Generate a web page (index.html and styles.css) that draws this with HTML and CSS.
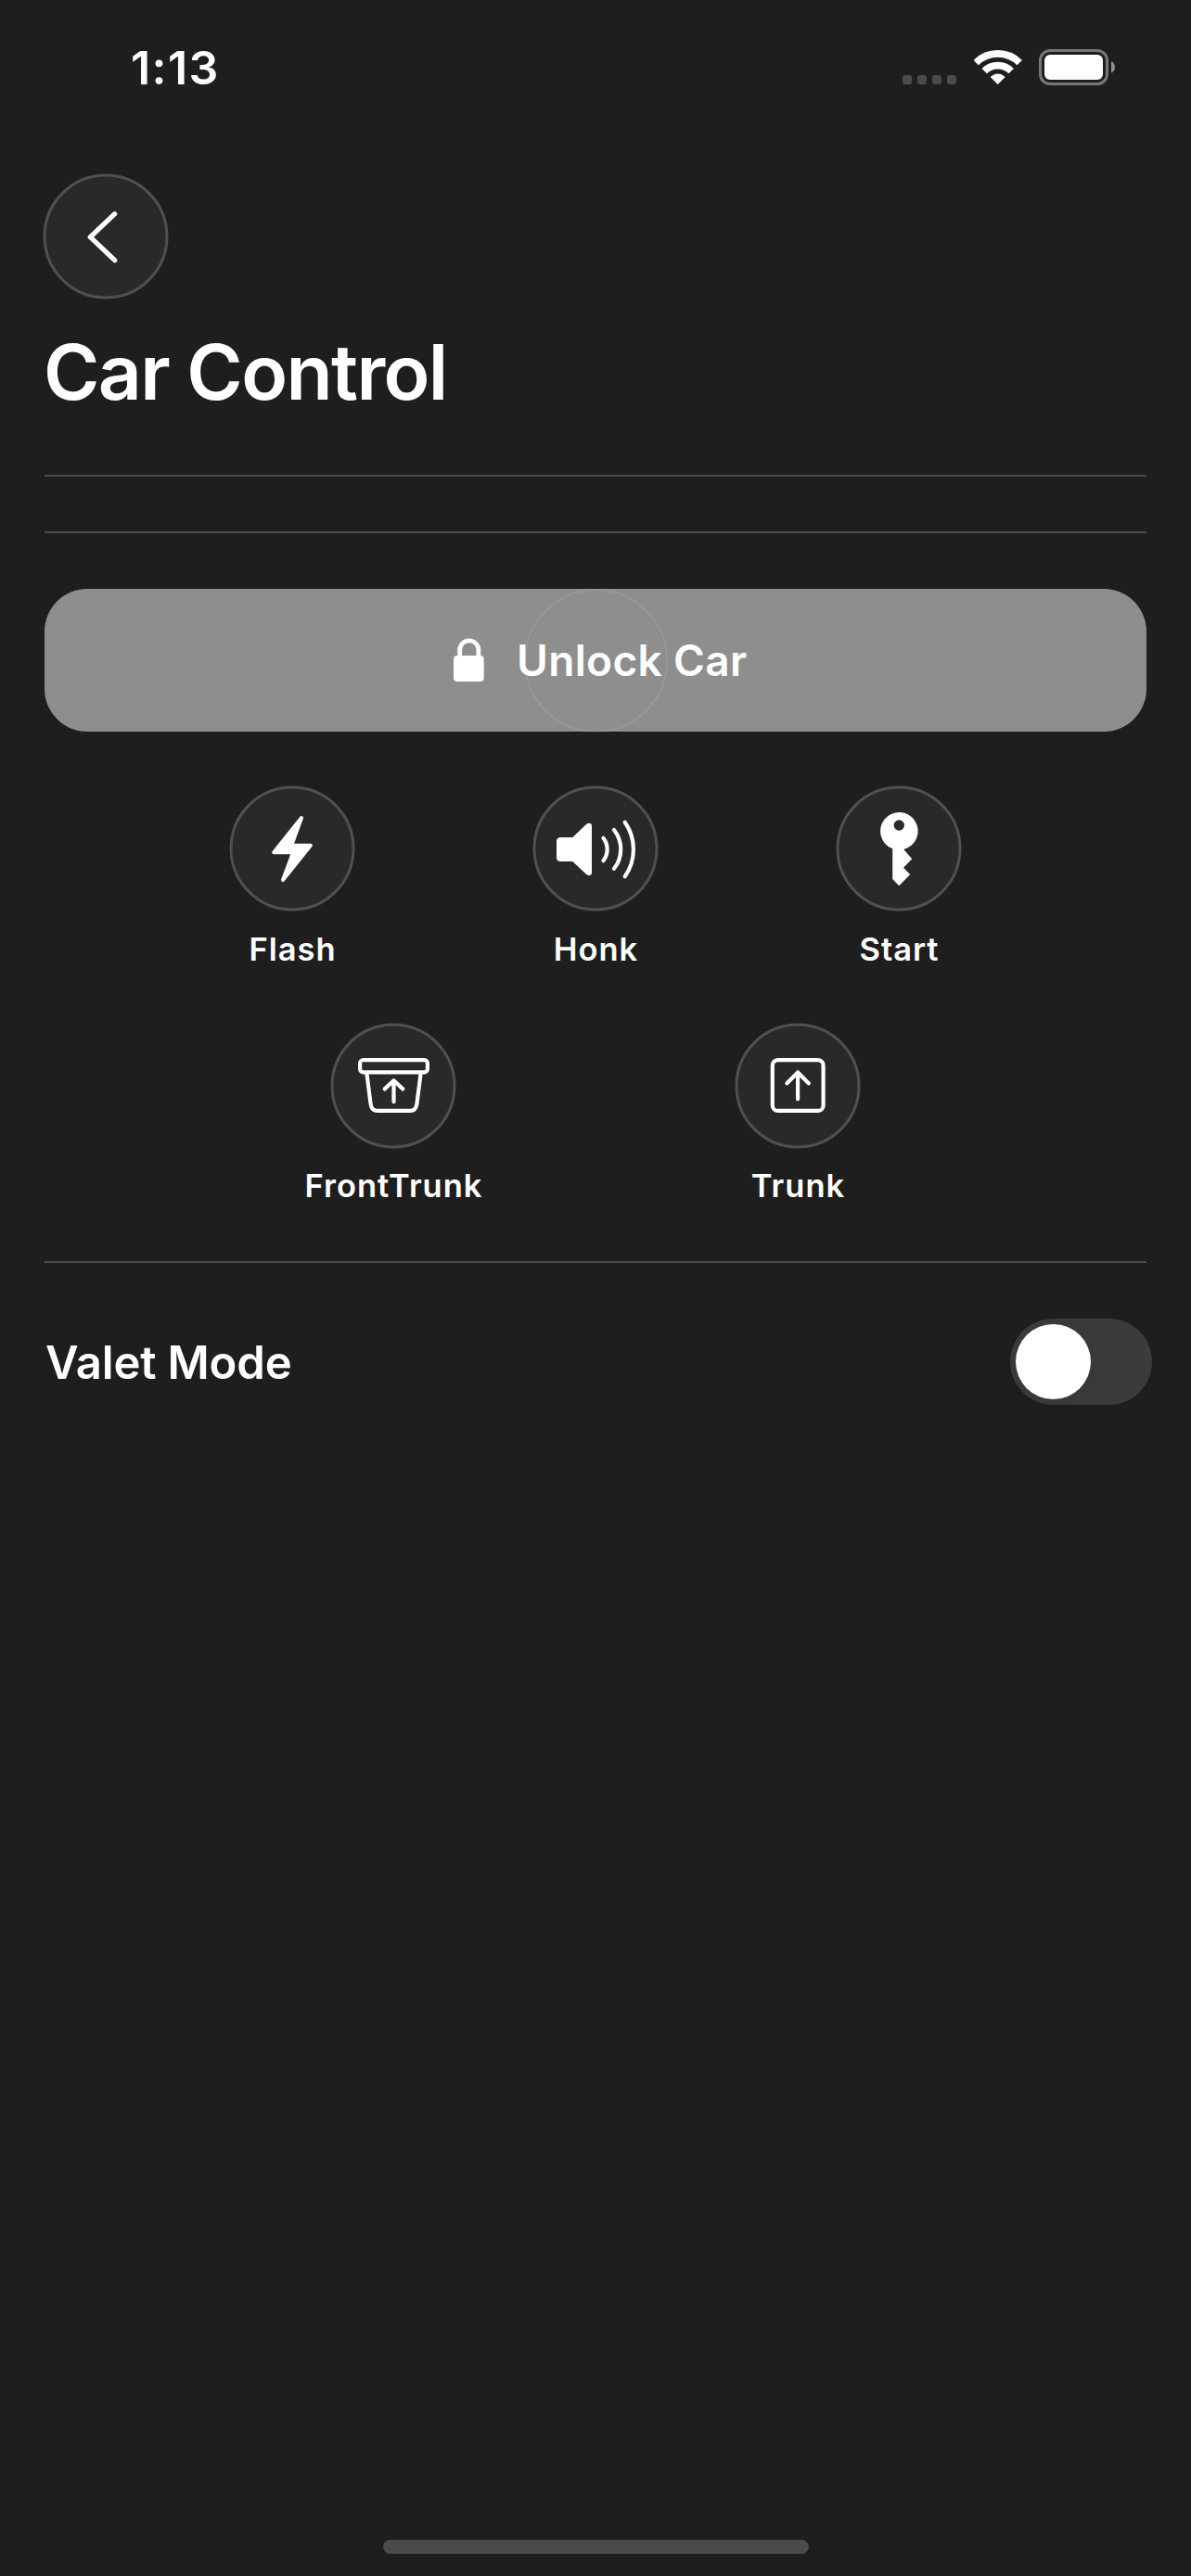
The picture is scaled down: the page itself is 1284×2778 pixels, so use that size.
FILE: index.html
```html
<!DOCTYPE html>
<html lang="en">
<head>
<meta charset="utf-8">
<title>Car Control</title>
<link rel="stylesheet" href="styles.css">
</head>
<body>
<div class="screen">
  <header class="status-bar">
    <span class="time">1:13</span>
    <div class="status-icons">
      <div class="cell-dots"><i></i><i></i><i></i><i></i></div>
      <svg class="wifi" viewBox="0 0 52 38" fill="none" stroke="#fff" stroke-width="7.6">
        <path d="M2.2 13.6A33.2 33.2 0 0 1 49.2 13.6"/>
        <path d="M11.2 22.6A20.5 20.5 0 0 1 40.2 22.6"/>
        <path d="M25.7 37L17.9 29.2Q18.2 28.4 19 27.9A11.7 11.7 0 0 1 32.4 27.9Q33.2 28.4 33.5 29.2Z" fill="#fff" stroke="none"/>
      </svg>
      <svg class="battery" viewBox="0 0 82 39">
        <rect x="1.5" y="1.5" width="72" height="36" rx="10.5" fill="none" stroke="#777" stroke-width="3"/>
        <rect x="6" y="6" width="63" height="27" rx="6" fill="#fff"/>
        <path d="M78 13.3Q82 15.2 82 19.5T78 25.7Z" fill="#8e8e8e"/>
      </svg>
    </div>
  </header>

  <main class="content">
    <button class="round back" aria-label="Back">
      <svg viewBox="0 0 136 136"><circle class="ring" cx="68" cy="68" r="66"/><path class="line" stroke-width="5.2" d="M77.7 43.7L51.3 68.7L77.7 93.7"/></svg>
    </button>
    <h1 class="title">Car Control</h1>
    <div class="divider"></div>
    <div class="divider second"></div>

    <button class="unlock">
      <svg class="lock" viewBox="0 0 33 48">
        <path d="M6.7 22V13a10.1 10.1 0 0 1 20.2 0V22" fill="none" stroke="#fff" stroke-width="4.8"/>
        <rect x="0" y="19" width="32.7" height="28" rx="4" fill="#fff"/>
      </svg>
      <span class="unlock-text">Unlock Car</span>
      <span class="ripple"></span>
    </button>

    <div class="actions first">
      <div class="action">
        <button class="round"><svg viewBox="0 0 136 136"><circle class="ring" cx="68" cy="68" r="66"/><path class="solid" stroke-width="4" d="M78 35L67.2 64.7H87.8L58 102L69.1 72.3H48.2Z"/></svg></button>
        <span class="label">Flash</span>
      </div>
      <div class="action">
        <button class="round"><svg viewBox="0 0 136 136">
          <circle class="ring" cx="68" cy="68" r="66"/>
          <path fill="#fff" d="M30.5 56H43.3L58 42Q59.5 40.7 61 40.7Q64 40.7 64 44V94Q64 97 61 97Q59.5 97 58 95.8L43.3 82H30.5Q26 82 26 77.5V60.5Q26 56 30.5 56Z"/>
          <path class="line" stroke-width="4.2" d="M76.4 56.8A19.5 19.5 0 0 1 76.4 81.1M88 48A33.8 33.8 0 0 1 88 89.8M99.7 39.8A50.8 50.8 0 0 1 99.7 98.2"/>
        </svg></button>
        <span class="label">Honk</span>
      </div>
      <div class="action">
        <button class="round"><svg viewBox="0 0 136 136"><circle class="ring" cx="68" cy="68" r="66"/><path fill="#fff" fill-rule="evenodd" d="M61.2 68.3A20.3 20.3 0 1 1 73.3 69L82.2 79.3L73 88.7L80.2 96L68.3 108.2L61.2 101ZM68.3 37.3a5.7 5.7 0 1 0 0 11.4a5.7 5.7 0 1 0 0-11.4Z"/></svg></button>
        <span class="label">Start</span>
      </div>
    </div>

    <div class="actions lower">
      <div class="action">
        <button class="round"><svg viewBox="0 0 136 136">
          <circle class="ring" cx="68" cy="68" r="66"/>
          <rect class="line" stroke-width="4.2" x="32.1" y="40.1" width="72.8" height="13.2" rx="3.5"/>
          <path class="line" stroke-width="4.2" d="M39.4 54.5L43.6 87.5Q44.6 94.9 51 94.9H86Q92.4 94.9 93.4 87.5L97.6 54.5M68.5 85.2V62.5M58.7 71.4L68.5 62.3L78.3 71.4"/>
        </svg></button>
        <span class="label">FrontTrunk</span>
      </div>
      <div class="action">
        <button class="round"><svg viewBox="0 0 136 136">
          <circle class="ring" cx="68" cy="68" r="66"/>
          <rect class="line" stroke-width="4.2" x="40.8" y="40.1" width="54.8" height="54.8" rx="6"/>
          <path class="line" stroke-width="4.2" d="M68.1 82.3V53.3M56.4 65.3L68.1 53.5L79.8 65.3"/>
        </svg></button>
        <span class="label">Trunk</span>
      </div>
    </div>

    <div class="divider third"></div>
    <div class="valet">
      <span class="valet-text">Valet Mode</span>
      <div class="toggle"><div class="knob"></div></div>
    </div>
  </main>
  <footer class="home"><div class="home-bar"></div></footer>
</div>
</body>
</html>
```
FILE: styles.css
```css
* { box-sizing: border-box; }
body {
  margin: 0;
  background: #1e1e1e;
  color: #fff;
  font-family: Inter, "Liberation Sans", sans-serif;
}
button {
  margin: 0;
  padding: 0;
  border: 0;
  background: none;
  color: inherit;
  font: inherit;
}
svg { display: block; }
.screen {
  display: flex;
  flex-direction: column;
  width: 1284px;
  height: 2778px;
  overflow: hidden;
}
.status-bar {
  display: flex;
  justify-content: space-between;
  height: 187px;
  padding: 43px 82px 0 141px;
}
.time {
  font-size: 50px;
  font-weight: 600;
  line-height: 60px;
  letter-spacing: 1.4px;
}
.status-icons {
  display: flex;
  align-items: flex-start;
  padding-top: 10px;
}
.cell-dots {
  display: flex;
  gap: 6px;
  margin: 28px 19px 0 0;
}
.cell-dots i {
  width: 10px;
  height: 10px;
  border-radius: 3px;
  background: #4b4b4b;
}
.wifi { width: 52px; height: 38px; margin: 1px 18px 0 0; }
.battery { width: 82px; height: 39px; }

.content { flex: 1; padding: 0 48px; }
.round {
  display: block;
  width: 136px;
  height: 136px;
  border-radius: 50%;
}
.round svg { width: 136px; height: 136px; }
.ring {
  fill: #292929;
  stroke: #505050;
  stroke-width: 3;
}
.back { margin-left: -2px; }
.line {
  fill: none;
  stroke: #fff;
  stroke-linecap: round;
  stroke-linejoin: round;
}
.solid {
  fill: #fff;
  stroke: #fff;
  stroke-linejoin: round;
}
.title {
  margin: 29px 0 60px -1px;
  font-size: 82px;
  font-weight: 600;
  line-height: 100px;
  letter-spacing: -1.6px;
  white-space: nowrap;
}
.divider { height: 2px; background: #4b4b4b; }
.second { margin-top: 59px; }

.unlock {
  position: relative;
  display: flex;
  align-items: center;
  width: 1188px;
  height: 154px;
  margin-top: 60px;
  padding-left: 441px;
  border-radius: 46px;
  background: #8e8e8e;
}
.lock { width: 33px; height: 48px; }
.unlock-text {
  margin-left: 35px;
  font-size: 46px;
  font-weight: 600;
  line-height: 60px;
  letter-spacing: 0.35px;
  white-space: nowrap;
}
.ripple {
  position: absolute;
  top: 0;
  left: 517px;
  width: 155px;
  height: 155px;
  border: 2px solid rgba(255, 255, 255, 0.09);
  border-radius: 50%;
}

.actions { display: flex; justify-content: center; }
.first { margin-top: 58px; gap: 191px; }
.lower { margin-top: 57px; gap: 300px; }
.action {
  display: flex;
  flex-direction: column;
  align-items: center;
  width: 136px;
}
.label {
  margin-top: 19px;
  padding-left: 1px;
  font-size: 34.5px;
  font-weight: 600;
  line-height: 44px;
  letter-spacing: 1px;
  white-space: nowrap;
}
.lower .label { margin-top: 18px; }
.third { margin-top: 59px; }
.valet {
  display: flex;
  align-items: center;
  justify-content: space-between;
  margin: 60px -6px 0 0;
}
.valet-text {
  padding: 2px 0 0 1px;
  font-size: 49px;
  font-weight: 600;
  line-height: 60px;
  letter-spacing: -0.15px;
  white-space: nowrap;
}
.toggle {
  width: 153px;
  height: 93px;
  padding: 6px;
  border-radius: 47px;
  background: #3b3b3d;
}
.knob {
  width: 81px;
  height: 81px;
  border-radius: 50%;
  background: #fff;
  box-shadow: 3px 6px 16px rgba(0, 0, 0, 0.08);
}
.home {
  display: flex;
  justify-content: center;
  height: 39px;
}
.home-bar {
  width: 459px;
  height: 15px;
  border-radius: 8px;
  background: #4b4b4b;
}
```
